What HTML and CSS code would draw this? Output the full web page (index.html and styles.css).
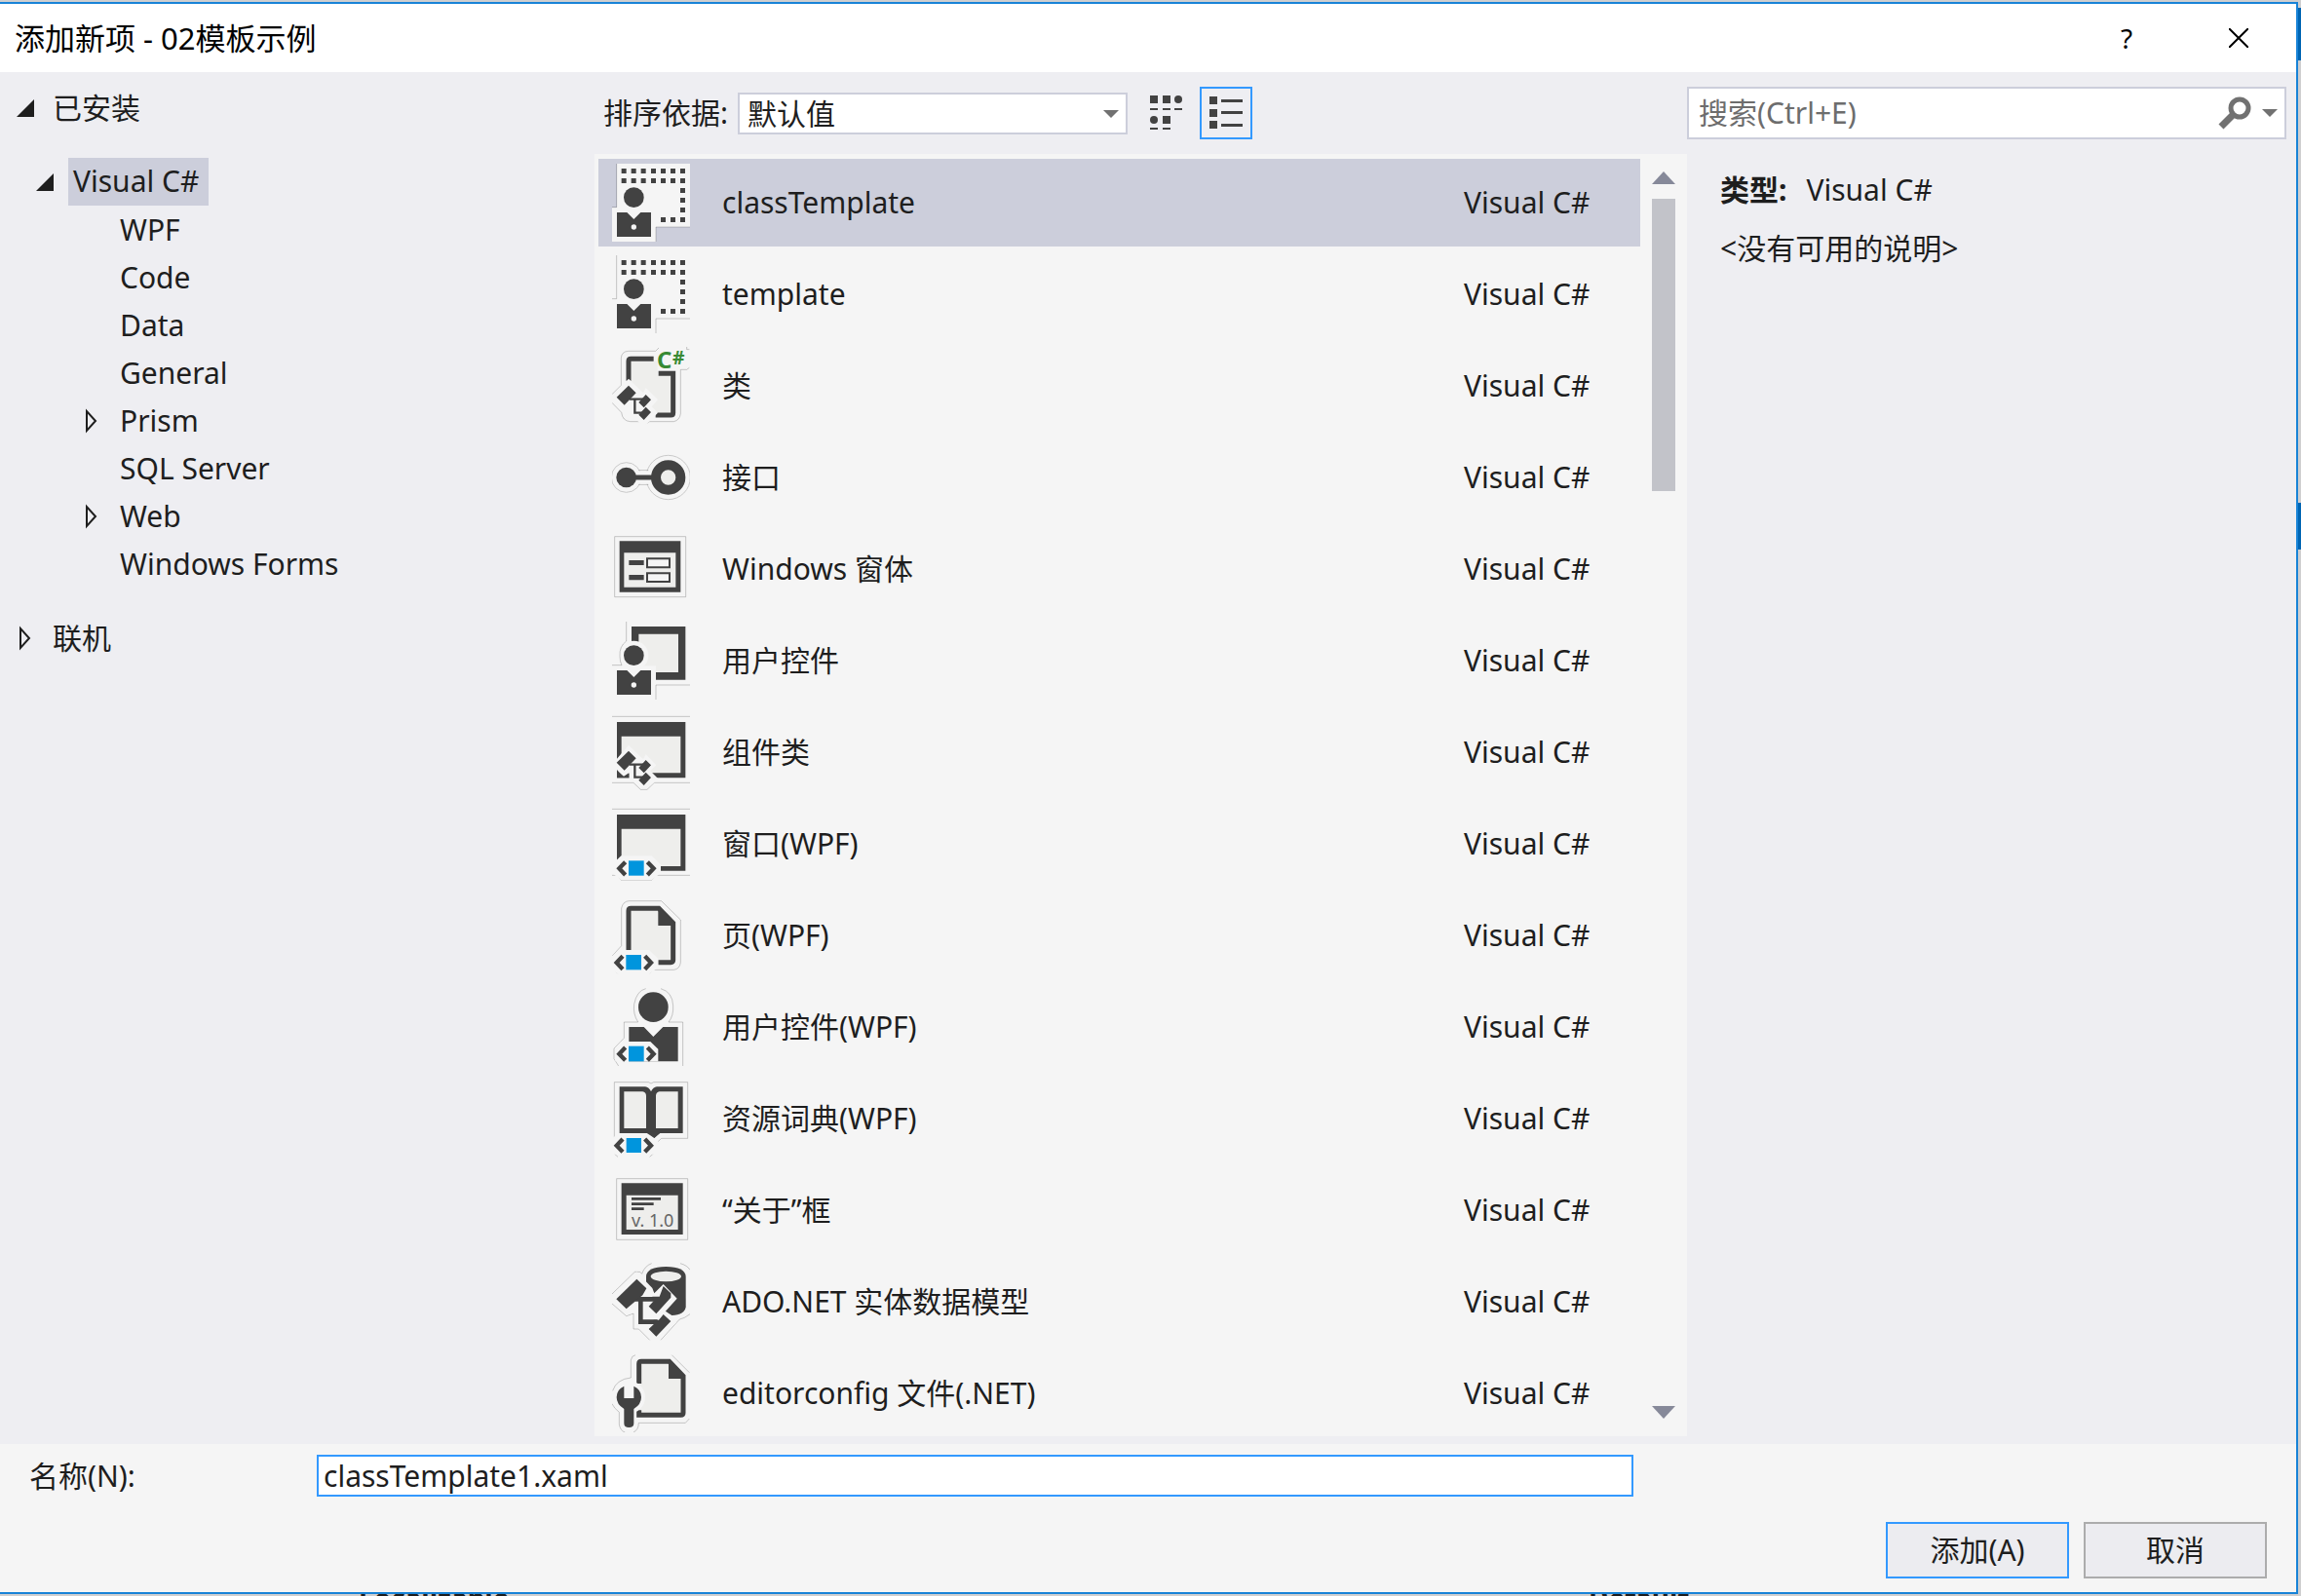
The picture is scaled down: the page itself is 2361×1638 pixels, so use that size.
FILE: index.html
```html
<!DOCTYPE html>
<html lang="zh-CN">
<head>
<meta charset="utf-8">
<title>添加新项 - 02模板示例</title>
<link rel="stylesheet" href="styles.css">
</head>
<body>
<svg class="defs" aria-hidden="true">
  <defs>
    <g id="person">
      <circle class="ink" cx="67" cy="104" r="31"/>
      <path class="ink" d="M15 150H46L67 171L88 150H120V225H15z"/>
      <circle class="halo" cx="67" cy="195" r="8"/>
    </g>
    <g id="class-mark">
      <path class="halo" d="M51 98L96 142L104 126L141 163L122 184L141 203L98 246L76 226L50 210V188L38 200L-4 157z"/>
      <path class="wire" d="M54 161H96M70 161V203H96"/>
      <path class="ink" d="M51 119L74 142L38 179L14 155zM104 147L120 163L98 187L82 171zM104 185L120 201L98 225L82 209z"/>
    </g>
    <g id="xaml">
      <path class="halo" d="M28 157H122L150 184V210L122 232H28L0 210V184z"/>
      <path class="chevron" d="M41 176L22 196L41 216M109 176L128 196L109 216"/>
      <path class="blue" d="M51 172H98V218H51z"/>
    </g>
    <symbol id="i-template" viewBox="0 0 240 240">
      <path class="halo" d="M15 0H240V195H135V240H0V135H15z"/>
      <path class="edge" d="M14 0V134H0M240 195H135V240"/>
      <path class="ink" d="M29 15h15v15h-15zM59 15h15v15h-15zM89 15h15v15h-15zM120 15h15v15h-15zM150 15h15v15h-15zM180 15h15v15h-15zM210 15h15v15h-15zM29 45h15v15h-15zM59 45h15v15h-15zM89 45h15v15h-15zM120 45h15v15h-15zM150 45h15v15h-15zM180 45h15v15h-15zM210 45h15v15h-15zM210 75h15v15h-15zM210 105h15v15h-15zM210 135h15v15h-15zM210 165h15v15h-15zM180 165h15v15h-15zM150 165h15v15h-15z"/>
      <use href="#person"/>
    </symbol>
    <symbol id="i-class" viewBox="0 0 240 240">
      <path class="edge" d="M0 146L28 118V34Q30 14 50 13H134L144 3M230 0V8H238M238 64L230 70H211V206Q208 226 190 230H116L98 240L84 230H56Q32 228 29 202L0 172"/>
      <path class="paper" d="M58 44H140V88H184V204H58z"/>
      <path class="line" d="M51 104V44Q51 37 58 37H128M143 82H188V203Q188 210 181 210H134"/>
      <use href="#class-mark"/>
      <text class="cs" x="138" y="66" font-size="72">C</text>
      <text class="cs" x="186" y="54" font-size="58">#</text>
    </symbol>
    <symbol id="i-interface" viewBox="0 0 240 240">
      <circle class="ring-edge" cx="44" cy="120" r="46"/>
      <circle class="ring-edge" cx="173" cy="120" r="68"/>
      <path class="edge" d="M82 98H112M82 142H112"/>
      <path class="halo" d="M60 100H130V140H60z"/>
      <path class="line" d="M60 120H130"/>
      <circle class="ink" cx="44" cy="120" r="31"/>
      <circle class="paper ring" cx="173" cy="120" r="38"/>
    </symbol>
    <symbol id="i-form" viewBox="0 0 240 240">
      <path class="edge" d="M8 20H227V206H8z"/>
      <path class="ink" d="M23 34H211V191H23z"/>
      <path class="paper" d="M37 70H196V176H37z"/>
      <path class="ink" d="M52 93H98V108H52zM52 138H98V154H52z"/>
      <path class="box" d="M108 88H177V115H108zM108 133H177V159H108z"/>
    </symbol>
    <symbol id="i-control" viewBox="0 0 240 240">
      <path class="ink" d="M60 15H226V179H60z"/>
      <path class="paper" d="M82 38H204V156H82z"/>
      <circle class="halo" cx="67" cy="104" r="45"/>
      <path class="halo" d="M0 136H135V240H0z"/>
      <path class="edge" d="M44 0V60Q22 76 24 106Q24 124 30 134H0M240 195H135V240"/>
      <use href="#person"/>
    </symbol>
    <symbol id="i-component" viewBox="0 0 240 240">
      <path class="edge" d="M0 10H240M0 214H66L88 235H108L130 214H240"/>
      <path class="ink" d="M15 27H226V199H15z"/>
      <path class="paper" d="M29 71H211V184H29z"/>
      <path class="halo" d="M51 98L96 142L104 126L136 160L118 178L142 202L108 232H88L66 210L52 199V186L36 198L15 174V140z"/>
      <path class="ink" d="M15 176L36 194L52 184V199H15z"/>
      <path class="wire" d="M54 158H96M70 158V197H96"/>
      <path class="ink" d="M51 116L74 139L38 176L14 152zM104 144L120 160L98 184L82 168zM104 182L120 198L98 222L82 206z"/>
    </symbol>
    <symbol id="i-window" viewBox="0 0 240 240">
      <path class="edge" d="M0 13H240M0 217H14L28 232H122L136 217H240"/>
      <path class="ink" d="M15 30H226V203H15z"/>
      <path class="paper" d="M29 74H211V189H29z"/>
      <use href="#xaml"/>
    </symbol>
    <symbol id="i-page" viewBox="0 0 240 240">
      <path class="edge" d="M0 184L29 152V36Q34 15 52 14H152L211 72V204Q208 224 190 226H128L116 238M0 218L18 238"/>
      <path class="paper" d="M51 37H143V90H188V203H51z"/>
      <path class="line" d="M51 180V44Q51 37 58 37H144L188 82V196Q188 203 181 203H142"/>
      <path class="ink" d="M142 32L194 84V90H142z"/>
      <use href="#xaml" x="-8" y="8"/>
    </symbol>
    <symbol id="i-usercontrol" viewBox="0 0 240 240">
      <path class="edge" d="M20 240L6 218V186L37 154V105H80Q64 80 68 50Q76 8 104 2M150 2Q186 12 188 54Q190 86 174 105H218V240"/>
      <circle class="ink" cx="127" cy="59" r="46"/>
      <path class="ink" d="M52 120H98L127 150L157 120H203V226H52z"/>
      <path class="halo" d="M28 165H118L142 188V226H10V184z"/>
      <path class="chevron" d="M41 183L22 203L41 223M109 183L128 203L109 223"/>
      <path class="blue" d="M51 179H98V226H51z"/>
    </symbol>
    <symbol id="i-book" viewBox="0 0 240 240">
      <path class="edge" d="M7 178V8H112L120 12L128 8H233V181H152L136 196V220L116 238M0 206V222L18 238"/>
      <path class="ink" d="M23 22H102Q114 24 120 37Q126 24 138 22H218V165H148L130 180L108 165H23z"/>
      <path class="paper" d="M37 37H94Q105 39 105 50V150H37zM203 37H146Q135 39 135 50V150H203z"/>
      <path class="halo" d="M14 166H114L142 190V230H0V186z"/>
      <path class="ink" d="M100 160H148L130 180z"/>
      <path class="chevron" d="M33 183L14 203L33 223M101 183L120 203L101 223"/>
      <path class="blue" d="M44 180H90V225H44z"/>
    </symbol>
    <symbol id="i-about" viewBox="0 0 240 240">
      <path class="edge" d="M14 23H233V211H14z"/>
      <path class="ink" d="M29 37H218V195H29z"/>
      <path class="paper" d="M44 74H203V180H44z"/>
      <path class="rule" d="M60 85H150M60 101H128M60 116H98"/>
      <text class="version" x="60" y="172" font-size="54">v. 1.0</text>
    </symbol>
    <symbol id="i-ado" viewBox="0 0 240 240">
      <path class="edge" d="M0 96L70 28H86L92 34Q100 10 122 2M210 2Q232 8 240 22M240 158Q222 172 208 174L150 238M116 238L82 204H66V156L44 164L0 126"/>
      <path class="ink" d="M105 42Q107 12 166 12Q225 12 227 42V136Q224 160 184 162L105 110z"/>
      <ellipse class="paper" cx="166" cy="42" rx="47" ry="16"/>
      <path class="halo" d="M76 28L124 78L130 94L158 66L200 110L162 152L198 184L136 244L76 196V150L44 162L-4 112z"/>
      <path class="ado-wire" d="M70 112H140M88 112V182H140"/>
      <path class="ink" d="M76 50L106 79L94 100L44 142L13 112zM158 72L181 94V107L136 157L113 134L128 118L124 104H146zM158 159L181 180L136 227L113 204L128 190V176H144z"/>
    </symbol>
    <symbol id="i-config" viewBox="0 0 240 240">
      <path class="edge" d="M2 112Q14 76 58 72V18Q60 4 72 2M184 2L238 56M0 152Q6 166 22 178V216Q26 236 40 240M66 240Q82 232 82 211H226L238 198"/>
      <path class="paper" d="M83 22H174V75H218V186H83z"/>
      <path class="line" d="M83 90V29Q83 22 90 22H176L219 67V180Q219 187 212 187H83V172"/>
      <path class="ink" d="M174 17L225 68V75H174z"/>
      <circle class="halo" cx="52" cy="132" r="50"/>
      <path class="ink" d="M37 98V135H67V98Q90 108 90 132Q90 154 67 168V212Q67 225 52 225Q37 225 37 212V168Q14 154 14 132Q14 108 37 98z"/>
    </symbol>
  </defs>
</svg>

<main class="dialog">
  <header class="titlebar">
    <h1 class="title">添加新项 - 02模板示例</h1>
    <button class="caption help" type="button" aria-label="帮助">?</button>
    <button class="caption close" type="button" aria-label="关闭">
      <svg width="20" height="20" viewBox="0 0 20 20"><path d="M0 0L20 20M20 0L0 20" stroke="#000" stroke-width="2"/></svg>
    </button>
  </header>

  <div class="content">
    <nav class="tree" aria-label="模板类别">
      <ul>
        <li>
          <a class="node root" href="#installed"><svg class="twisty" viewBox="0 0 20 26"><path class="open" d="M20 4V22H2z"/></svg><span>已安装</span></a>
          <ul class="group">
            <li>
              <a class="node lang" href="#csharp"><svg class="twisty" viewBox="0 0 20 26"><path class="open" d="M20 4V22H2z"/></svg><span class="selected">Visual C#</span></a>
              <ul>
                <li><a class="node leaf" href="#wpf">WPF</a></li>
                <li><a class="node leaf" href="#code">Code</a></li>
                <li><a class="node leaf" href="#data">Data</a></li>
                <li><a class="node leaf" href="#general">General</a></li>
                <li><a class="node branch" href="#prism"><svg class="twisty" viewBox="0 0 20 26"><path class="closed" d="M6 3V23L15 13z"/></svg><span>Prism</span></a></li>
                <li><a class="node leaf" href="#sql">SQL Server</a></li>
                <li><a class="node branch" href="#web"><svg class="twisty" viewBox="0 0 20 26"><path class="closed" d="M6 3V23L15 13z"/></svg><span>Web</span></a></li>
                <li><a class="node leaf" href="#forms">Windows Forms</a></li>
              </ul>
            </li>
          </ul>
        </li>
        <li><a class="node root" href="#online"><svg class="twisty" viewBox="0 0 20 26"><path class="closed" d="M6 3V23L15 13z"/></svg><span>联机</span></a></li>
      </ul>
    </nav>

    <section class="templates">
      <div class="toolbar">
        <label for="sort">排序依据:</label>
        <div class="combo">
          <select id="sort"><option>默认值</option></select>
          <svg class="drop" viewBox="0 0 16 8"><path d="M0 0H16L8 8z"/></svg>
        </div>
        <button class="view" type="button" aria-label="中等图标">
          <svg width="34" height="36" viewBox="0 0 34 36"><path class="ink" d="M0 0h8v8h-8zM13 0h8v8h-8zM0 13h8v2h-8zM13 13h8v2h-8zM25 13h8v2h-8zM13 21h8v8h-8zM0 33h8v2h-8zM13 33h8v2h-8z"/><circle class="ink" cx="29" cy="4" r="4"/><circle class="ink" cx="4" cy="25" r="4"/></svg>
        </button>
        <button class="view active" type="button" aria-label="小图标" aria-pressed="true">
          <svg width="34" height="34" viewBox="0 0 34 34"><path class="ink" d="M0 0h8v8h-8zM0 13h8v8h-8zM0 25h8v8h-8zM12 3h23v3h-23zM12 15h23v3h-23zM12 28h23v3h-23z"/></svg>
        </button>
      </div>
      <div class="listbox">
        <ul class="items" role="listbox" aria-label="模板">
          <li class="item current" role="option" aria-selected="true"><svg class="icon"><use href="#i-template"/></svg><span class="name">classTemplate</span><span class="type">Visual C#</span></li>
          <li class="item" role="option"><svg class="icon"><use href="#i-template"/></svg><span class="name">template</span><span class="type">Visual C#</span></li>
          <li class="item" role="option"><svg class="icon"><use href="#i-class"/></svg><span class="name">类</span><span class="type">Visual C#</span></li>
          <li class="item" role="option"><svg class="icon"><use href="#i-interface"/></svg><span class="name">接口</span><span class="type">Visual C#</span></li>
          <li class="item" role="option"><svg class="icon"><use href="#i-form"/></svg><span class="name">Windows 窗体</span><span class="type">Visual C#</span></li>
          <li class="item" role="option"><svg class="icon"><use href="#i-control"/></svg><span class="name">用户控件</span><span class="type">Visual C#</span></li>
          <li class="item" role="option"><svg class="icon"><use href="#i-component"/></svg><span class="name">组件类</span><span class="type">Visual C#</span></li>
          <li class="item" role="option"><svg class="icon"><use href="#i-window"/></svg><span class="name">窗口(WPF)</span><span class="type">Visual C#</span></li>
          <li class="item" role="option"><svg class="icon"><use href="#i-page"/></svg><span class="name">页(WPF)</span><span class="type">Visual C#</span></li>
          <li class="item" role="option"><svg class="icon"><use href="#i-usercontrol"/></svg><span class="name">用户控件(WPF)</span><span class="type">Visual C#</span></li>
          <li class="item" role="option"><svg class="icon"><use href="#i-book"/></svg><span class="name">资源词典(WPF)</span><span class="type">Visual C#</span></li>
          <li class="item" role="option"><svg class="icon"><use href="#i-about"/></svg><span class="name">“关于”框</span><span class="type">Visual C#</span></li>
          <li class="item" role="option"><svg class="icon"><use href="#i-ado"/></svg><span class="name">ADO.NET 实体数据模型</span><span class="type">Visual C#</span></li>
          <li class="item" role="option"><svg class="icon"><use href="#i-config"/></svg><span class="name">editorconfig 文件(.NET)</span><span class="type">Visual C#</span></li>
        </ul>
        <div class="scrollbar" aria-hidden="true">
          <svg width="24" height="13" viewBox="0 0 24 13"><path d="M0 13H24L12 0z"/></svg>
          <div class="track"><div class="thumb"></div></div>
          <svg width="24" height="13" viewBox="0 0 24 13"><path d="M0 0H24L12 13z"/></svg>
        </div>
      </div>
    </section>

    <aside class="details">
      <div class="searchrow">
        <div class="search">
          <input type="search" placeholder="搜索(Ctrl+E)" aria-label="搜索">
          <svg width="34" height="34" viewBox="0 0 34 34"><circle cx="22" cy="12" r="9" fill="none" stroke="#717171" stroke-width="5"/><path d="M16 18L3 31" stroke="#717171" stroke-width="7"/></svg>
          <svg class="more" viewBox="0 0 16 8"><path d="M0 0H16L8 8z"/></svg>
        </div>
      </div>
      <div class="about">
        <p><b>类型:</b><span>Visual C#</span></p>
        <p>&lt;没有可用的说明&gt;</p>
      </div>
    </aside>
  </div>

  <footer class="footer">
    <div class="namerow">
      <label for="name">名称(N):</label>
      <input id="name" type="text" value="classTemplate1.xaml">
    </div>
    <div class="actions">
      <button class="action primary" type="button">添加(A)</button>
      <button class="action" type="button">取消</button>
    </div>
  </footer>
</main>
<div class="behind-right" aria-hidden="true"></div>
<div class="behind-bottom" aria-hidden="true"><span>Localizable</span><span>Default</span></div>
</body>
</html>
```

FILE: styles.css
```css
* { box-sizing: border-box; }

body {
  margin: 0;
  padding-top: 2px;
  min-height: 100vh;
  display: grid;
  grid-template-columns: minmax(0, 1fr) 3px;
  grid-template-rows: 1fr 2px;
  background: #cfcfd0;
  color: #1e1e1e;
  font: 30px/40px "Noto Sans", "Noto Sans CJK SC", sans-serif;
}

ul, h1, p { margin: 0; padding: 0; list-style: none; font: inherit; }
a { color: inherit; text-decoration: none; }
button, input, select {
  margin: 0;
  color: inherit;
  font: inherit;
  border-radius: 0;
  outline: none;
}
svg { display: block; flex: none; }
.defs { position: absolute; width: 0; height: 0; }

/* icon paint */
.ink { fill: #424242; }
.halo { fill: #f5f5f5; }
.paper { fill: #eeeeec; }
.blue { fill: #0095dd; }
.edge { fill: none; stroke: #000; stroke-opacity: .2; stroke-width: 3; }
.ring-edge { fill: #f5f5f5; stroke: #cacaca; stroke-width: 3; }
.ring { stroke: #424242; stroke-width: 30; }
.line { fill: none; stroke: #424242; stroke-width: 15; }
.wire { fill: none; stroke: #424242; stroke-width: 7; }
.ado-wire { fill: none; stroke: #424242; stroke-width: 14; }
.rule { stroke: #424242; stroke-width: 8; }
.box { fill: #f5f5f5; stroke: #424242; stroke-width: 6; }
.chevron { fill: none; stroke: #424242; stroke-width: 13; }
.cs { fill: #388a34; font-weight: 700; }
.version { fill: #666; }

.dialog {
  display: flex;
  flex-direction: column;
  border: 2px solid #1883d7;
  border-left: 0;
  background: #f5f5f5;
}

.titlebar {
  display: flex;
  align-items: center;
  height: 70px;
  padding-left: 15px;
  background: #fff;
  color: #000;
}
.title { flex: 1; font-size: 31px; }
.caption {
  display: flex;
  align-items: center;
  justify-content: center;
  width: 116px;
  height: 68px;
  padding: 0;
  border: 0;
  background: none;
}
.help { font-size: 28px; }
.close { padding-right: 2px; }

.content {
  flex: 1;
  display: grid;
  grid-template-columns: 610px minmax(0, 1fr) 625px;
  padding-bottom: 8px;
  background: #eeeef2;
}

.tree { padding-top: 12px; }
.node { display: flex; align-items: center; height: 49px; }
.root { padding-left: 15px; gap: 19px; }
.lang { padding-left: 35px; gap: 15px; }
.branch { padding-left: 83px; gap: 20px; }
.leaf { padding-left: 123px; }
.group { padding: 27px 0; }
.selected { min-width: 144px; padding: 4px 5px 5px; background: #cccedb; }
.twisty { width: 20px; height: 26px; }
.open { fill: #1e1e1e; }
.closed { fill: none; stroke: #1e1e1e; stroke-width: 2; }

.templates { display: flex; flex-direction: column; }
.toolbar {
  display: flex;
  align-items: center;
  height: 84px;
  padding-left: 9px;
}
.combo { position: relative; width: 400px; margin: 0 13px 0 10px; }
.combo select {
  display: block;
  width: 100%;
  height: 43px;
  padding: 0 8px;
  border: 2px solid #cccedb;
  background: #fff;
  appearance: none;
}
.drop { position: absolute; right: 9px; top: 18px; }
.drop, .more { width: 16px; height: 8px; fill: #717171; }
.view {
  display: flex;
  align-items: center;
  justify-content: center;
  width: 54px;
  height: 54px;
  margin-right: 7px;
  padding: 0;
  border: 2px solid transparent;
  background: none;
}
.active { border-color: #39f; }

.listbox {
  flex: 1;
  display: flex;
  padding: 5px 0 0 4px;
  background: #f5f5f5;
}
.items { flex: 1; display: flex; flex-direction: column; gap: 4px; }
.item {
  display: flex;
  align-items: center;
  height: 90px;
  padding: 0 49px 0 14px;
}
.item:last-child { height: 89px; }
.current { background: #cccedb; }
.icon { width: 80px; height: 80px; }
.name { flex: 1; padding-left: 33px; }
.type { width: 132px; }

.scrollbar {
  display: flex;
  flex-direction: column;
  gap: 15px;
  width: 48px;
  padding: 13px 12px 18px;
  fill: #868999;
}
.track { flex: 1; }
.thumb { height: 300px; background: #c2c3c9; }

.searchrow { display: flex; align-items: center; height: 84px; padding-right: 10px; }
.search {
  flex: 1;
  display: flex;
  align-items: center;
  gap: 11px;
  height: 54px;
  padding: 0 7px 0 10px;
  border: 2px solid #cccedb;
  background: #fff;
}
.search input {
  flex: 1;
  min-width: 0;
  padding: 0;
  border: 0;
  background: none;
}
.search input::placeholder { color: #6d6d6d; opacity: 1; }
.about { display: flex; flex-direction: column; gap: 20px; padding: 17px 34px; }
.about b { margin-right: 20px; }

.footer { padding: 11px 30px 14px; }
.namerow { display: flex; align-items: center; }
.namerow label { width: 295px; }
.namerow input {
  flex: 1;
  height: 43px;
  margin-right: 650px;
  padding: 0 5px;
  border: 2px solid #39f;
  background: #fff;
}
.actions { display: flex; justify-content: flex-end; gap: 15px; margin-top: 26px; }
.action {
  width: 188px;
  height: 58px;
  padding: 0;
  border: 2px solid #acacac;
  background: #ececf0;
}
.primary { border-color: #39f; }

/* slivers of the window behind the dialog */
.behind-right {
  background: linear-gradient(#cfcfd0 6px, #0065b3 6px 60px, #cfcfd0 60px 514px, #0065b3 514px 562px, #cfcfd0 562px);
}
.behind-bottom {
  display: grid;
  grid-template-columns: 1262px 1fr;
  padding-left: 368px;
  overflow: hidden;
  font-size: 28px;
  font-weight: 700;
  line-height: 8px;
}
```
